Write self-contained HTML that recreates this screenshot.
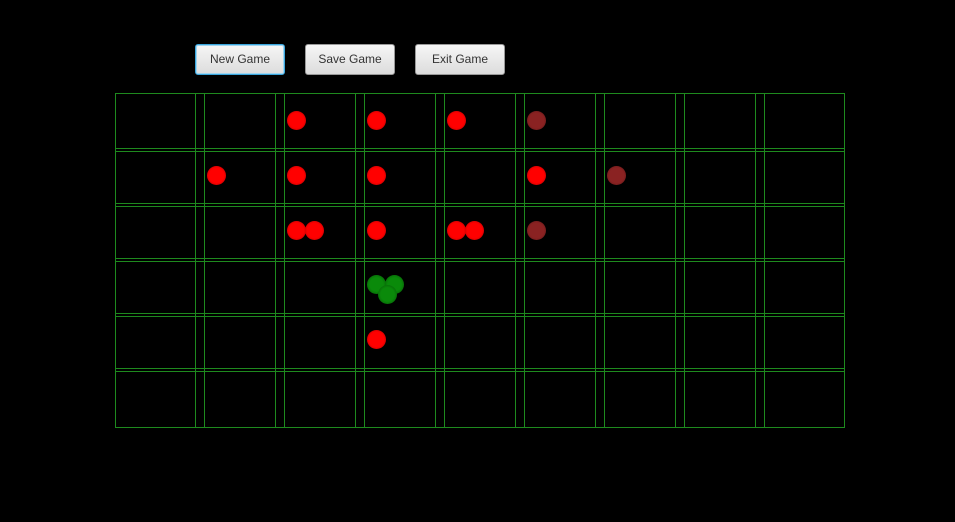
<!DOCTYPE html>
<html><head><style>
body{margin:0;width:955px;height:522px;background:#000;position:relative;overflow:hidden;font-family:"Liberation Sans",sans-serif}
.b{position:absolute;top:44px;width:88px;height:29px;border-radius:3px;background:linear-gradient(#f6f6f6,#dcdcdc);border:1px solid #999;font-size:12px;color:#333;text-align:center;line-height:29px;z-index:2}
.f{border:1px solid #3aa6dd;box-shadow:0 0 0 1px #9fd4ef inset}
.c{position:absolute;border:1px solid #1e8a1e;box-sizing:border-box}
.r{position:absolute;width:19px;height:19px;border-radius:50%;background:radial-gradient(circle at 50% 50%,#ff0000 55%,#a00000 100%)}
.d{background:radial-gradient(circle,#8a2222 55%,#5a1515 100%)}
.g{position:absolute;width:19px;height:19px;border-radius:50%;background:radial-gradient(circle,#0a8a0a 50%,#045004 100%)}
</style></head><body>
<div class="b f" style="left:195px">New Game</div>
<div class="b" style="left:305px">Save Game</div>
<div class="b" style="left:415px">Exit Game</div>
<div id="grid"></div>
<script>
(function(){
var g=document.getElementById('grid'),h='';
for(var r=0;r<6;r++)for(var c=0;c<9;c++){
var ty=93+r*55, hh=(r==5?60:59);
h+='<div class="c" style="left:'+(115+c*80)+'px;top:'+ty+'px;width:90px;height:'+hh+'px"></div>';}
function ball(x,y,cl){h+='<div class="'+cl+'" style="left:'+(x-9.5)+'px;top:'+(y-9.5)+'px"></div>';}
[[296,120],[376,120],[456,120],[216,175],[296,175],[376,175],[536,175],[296,230],[314,230],[376,230],[456,230],[474,230],[376,339]].forEach(function(p){ball(p[0],p[1],'r')});
[[536,120],[616,175],[536,230]].forEach(function(p){ball(p[0],p[1],'r d')});
ball(376,284,'g');ball(394,284,'g');ball(387,294,'g');
g.innerHTML=h;
})();
</script>
</body></html>
